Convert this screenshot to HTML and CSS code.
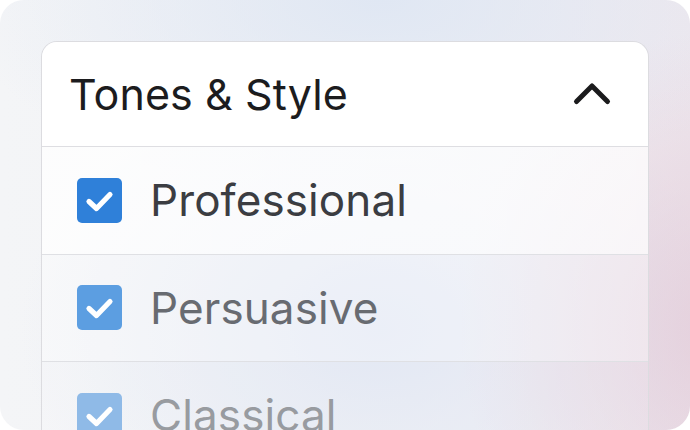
FILE: index.html
```html
<!DOCTYPE html>
<html>
<head>
<meta charset="utf-8">
<link rel="stylesheet" href="styles.css">
</head>
<body>
<div class="frame">
  <div class="card">
    <div class="header">
      <span class="title">Tones &amp; Style</span>
      <svg class="chev" width="40" height="24" viewBox="0 0 40 24"><path d="M4.5 19.5 L20 4 L35.5 19.5" fill="none" stroke="#1b1b1d" stroke-width="5" stroke-linecap="round" stroke-linejoin="round"/></svg>
    </div>
    <div class="row r1">
      <span class="box"><svg width="45" height="45" viewBox="0 0 45 45"><path d="M12 23.5 L19.5 30.5 L33 16.5" fill="none" stroke="#fff" stroke-width="5.2" stroke-linecap="round" stroke-linejoin="round"/></svg></span>
      <span class="label">Professional</span>
    </div>
    <div class="row r2">
      <span class="box"><svg width="45" height="45" viewBox="0 0 45 45"><path d="M12 23.5 L19.5 30.5 L33 16.5" fill="none" stroke="#fff" stroke-width="5.2" stroke-linecap="round" stroke-linejoin="round"/></svg></span>
      <span class="label">Persuasive</span>
    </div>
    <div class="row r3">
      <span class="box"><svg width="45" height="45" viewBox="0 0 45 45"><path d="M12 23.5 L19.5 30.5 L33 16.5" fill="none" stroke="#fff" stroke-width="5.2" stroke-linecap="round" stroke-linejoin="round"/></svg></span>
      <span class="label">Classical</span>
    </div>
  </div>
</div>
</body>
</html>
```
FILE: styles.css
```css
html, body {
  margin: 0;
  padding: 0;
  background: #ffffff;
}
body {
  width: 690px;
  height: 430px;
  overflow: hidden;
  font-family: Inter, "Noto Sans", sans-serif;
}
.frame {
  width: 690px;
  height: 430px;
  box-sizing: border-box;
  border-radius: 24px;
  overflow: hidden;
  padding: 41px 41px 0 41px;
  background:
    radial-gradient(ellipse 260px 300px at 720px 330px, rgba(226, 200, 214, 0.75), rgba(226, 200, 214, 0) 100%),
    radial-gradient(ellipse 420px 200px at 380px 0px, rgba(222, 230, 243, 0.9), rgba(222, 230, 243, 0) 100%),
    radial-gradient(ellipse 360px 260px at 380px 330px, rgba(220, 227, 242, 0.9), rgba(220, 227, 242, 0) 100%),
    linear-gradient(90deg, #f4f5f7 0%, #f0f1f5 60%, #eee8ee 100%);
}
.card {
  height: 420px;
  border: 1.5px solid #dcdce0;
  border-bottom: none;
  border-radius: 16px 16px 0 0;
  overflow: hidden;
  display: flex;
  flex-direction: column;
}
.header {
  height: 104px;
  flex: none;
  background: #ffffff;
  display: flex;
  align-items: center;
  justify-content: space-between;
  padding: 0 36.5px 0 27px;
  border-bottom: 1.5px solid #dedee2;
}
.title {
  font-size: 43px;
  color: #1c1c1e;
  letter-spacing: 0.1px;
}
.chev {
  display: block;
}
.row {
  height: 106.5px;
  flex: none;
  display: flex;
  align-items: center;
  gap: 28px;
  padding-left: 35px;
  border-bottom: 1.5px solid #dfe0e4;
}
.row.r1 {
  background: linear-gradient(90deg, rgba(255,255,255,0.8), rgba(255,255,255,0.75));
}
.row.r2 {
  background: rgba(255,255,255,0.4);
}
.row.r3 {
  background: rgba(255,255,255,0.15);
  border-bottom: none;
}
.box {
  width: 45px;
  height: 45px;
  border-radius: 5px;
  display: block;
  flex: none;
}
.box svg { display: block; }
.r1 .box { background: #2f80d9; }
.r2 .box { background: #5c9ee1; }
.r3 .box { background: #8fbae7; }
.label {
  font-size: 44px;
  letter-spacing: 0.1px;
}
.r1 .label { color: #3b3d42; }
.r2 .label { color: #686b71; }
.r3 .label { color: #989ba0; }
```
